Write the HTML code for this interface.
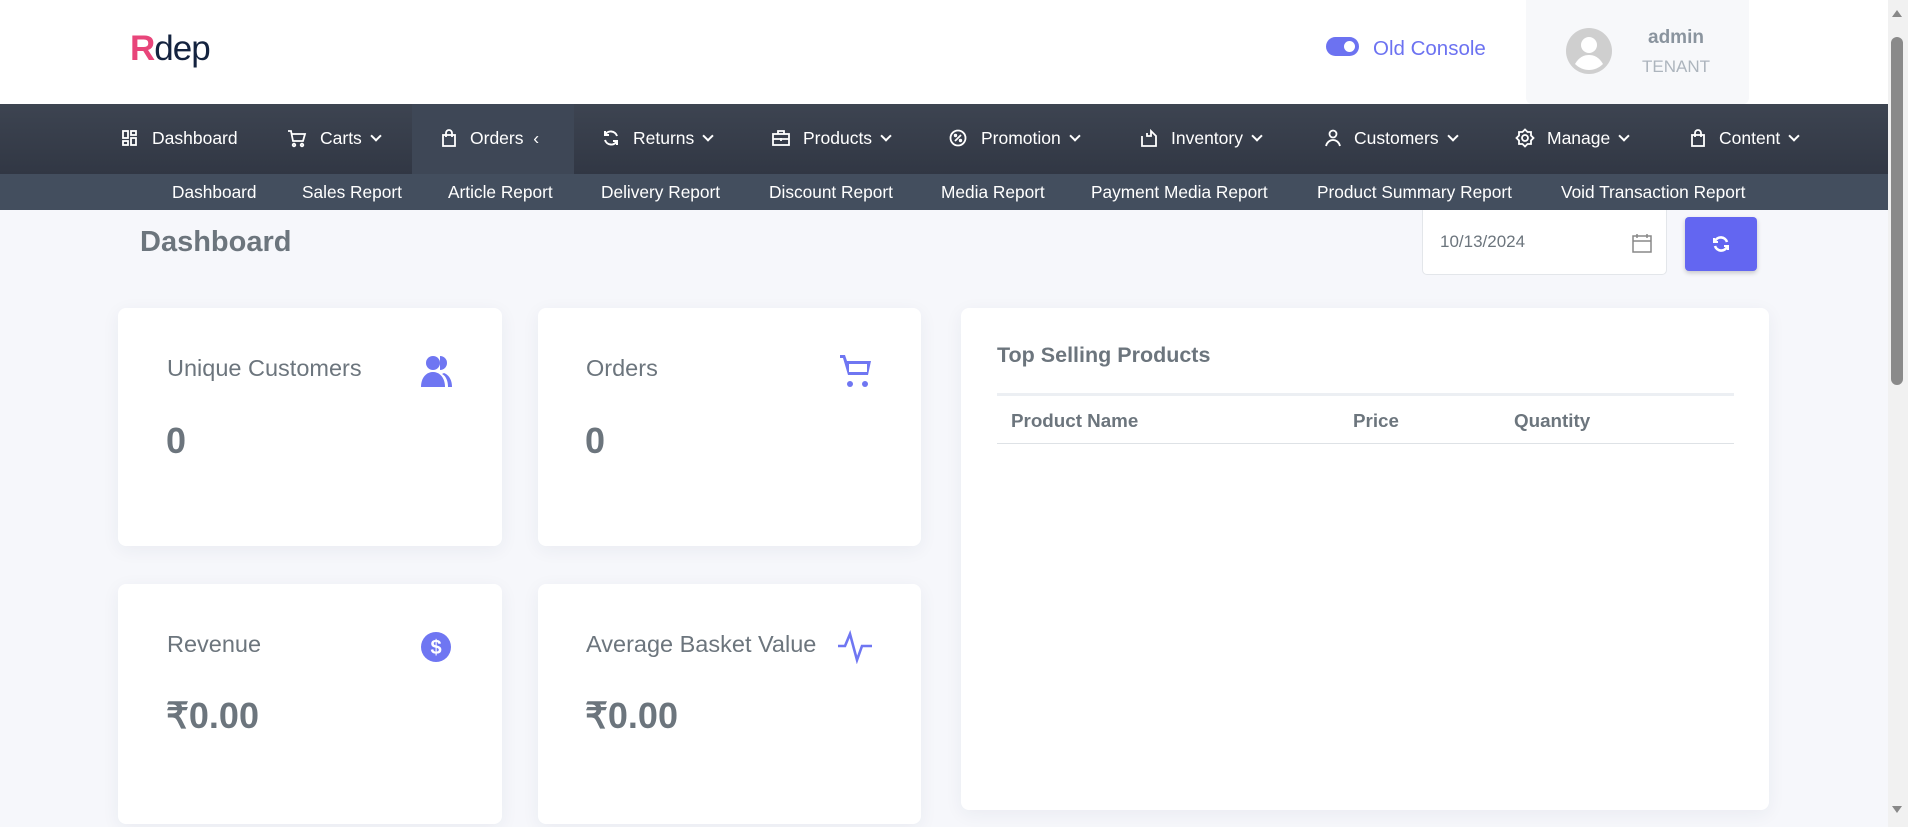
<!DOCTYPE html>
<html><head><meta charset="utf-8"><style>
*{margin:0;padding:0;box-sizing:border-box}
body{width:1908px;height:827px;overflow:hidden;background:#f6f7fb;font-family:"Liberation Sans",sans-serif;position:relative}
.a{position:absolute;white-space:nowrap}
.hdr{left:0;top:0;width:1888px;height:104px;background:#fff}
.nav{left:0;top:104px;width:1888px;height:70px;background:linear-gradient(#3d4451,#313744)}
.sub{left:0;top:174px;width:1888px;height:36px;background:#434e5e}
.nt{color:#fff;font-size:17.5px;top:128px}
.st{color:#fff;font-size:17.3px;top:182px}
.ic{top:128px;width:20px;height:20px}
.card{background:#fff;border-radius:8px;box-shadow:0 4px 18px rgba(40,50,90,.06)}
.lbl{color:#6c757d;font-size:23.5px}
.val{color:#6c757d;font-size:36px;font-weight:bold}
.th{color:#6c757d;font-size:18.8px;font-weight:bold;top:410px}
.cv{display:inline-block;width:8px;height:8px;border-right:2px solid #fff;border-bottom:2px solid #fff;transform:rotate(45deg);margin-left:10px;position:relative;top:-4px}
</style></head><body>
<div class="a hdr"></div>
<div class="a" style="left:130px;top:29px;font-size:35px;color:#14233f;letter-spacing:-1px"><span style="color:#e8457a;font-weight:bold">R</span>dep</div>
<div class="a" style="left:1326px;top:37px;width:33px;height:19px;border-radius:10px;background:#6c72f1"><div style="position:absolute;right:4px;top:4px;width:11px;height:11px;border-radius:50%;background:#fff"></div></div>
<div class="a" style="left:1373px;top:37px;font-size:20.5px;color:#6c72f1">Old Console</div>
<div class="a" style="left:1526px;top:0;width:223px;height:104px;background:#f7f8fa;border-radius:0 0 6px 6px"></div>
<svg class="a" style="left:1565px;top:27px" width="48" height="48" viewBox="0 0 48 48"><circle cx="24" cy="24" r="23" fill="#cfcfcf"/><circle cx="24" cy="18" r="8" fill="#fff"/><path d="M10 37c4-7 9-9 14-9s10 2 14 9c-4 4-9 6-14 6s-10-2-14-6z" fill="#fff"/></svg>
<div class="a" style="left:1648px;top:27px;font-size:19px;font-weight:bold;color:#8a949e">admin</div>
<div class="a" style="left:1642px;top:57px;font-size:17px;color:#adb5bd">TENANT</div>
<div class="a" style="right:0;top:0;width:20px;height:827px;background:#f1f1f1"></div>
<div class="a" style="left:1891px;top:37px;width:12px;height:348px;border-radius:6px;background:#8a8a8a"></div>
<div class="a" style="left:1892px;top:10px;width:0;height:0;border-left:5px solid transparent;border-right:5px solid transparent;border-bottom:7px solid #888"></div>
<div class="a" style="left:1892px;top:806px;width:0;height:0;border-left:5px solid transparent;border-right:5px solid transparent;border-top:7px solid #888"></div>

<div class="a nav"></div>
<div class="a" style="left:412px;top:104px;width:162px;height:70px;background:#3e4756"></div>
<div class="a sub"></div>
<svg class="a ic" style="left:120px" viewBox="0 0 20 20" fill="none" stroke="#fff" stroke-width="1.8"><rect x="3" y="3" width="5" height="7"/><rect x="11" y="3" width="5" height="4"/><rect x="3" y="13" width="5" height="4"/><rect x="11" y="10" width="5" height="7"/></svg>
<div class="a nt" style="left:152px">Dashboard</div>
<svg class="a ic" style="left:287px" viewBox="0 0 20 20" fill="none" stroke="#fff" stroke-width="1.8"><path d="M1 3h3l2 10h10l2-7H5"/><circle cx="7" cy="17" r="1.3"/><circle cx="15" cy="17" r="1.3"/></svg>
<div class="a nt" style="left:320px">Carts<span class="cv"></span></div>
<svg class="a ic" style="left:439px" viewBox="0 0 20 20" fill="none" stroke="#fff" stroke-width="1.8"><rect x="4" y="7" width="12" height="11"/><path d="M7 9V5a3 3 0 016 0v4"/></svg>
<div class="a nt" style="left:470px">Orders &nbsp;‹</div>
<svg class="a ic" style="left:601px" viewBox="0 0 20 20" fill="none" stroke="#fff" stroke-width="2"><path d="M16 8a6.5 6.5 0 00-12-1M4 12a6.5 6.5 0 0012 1M4 3v4h4M16 17v-4h-4"/></svg>
<div class="a nt" style="left:633px">Returns<span class="cv"></span></div>
<svg class="a ic" style="left:771px" viewBox="0 0 20 20" fill="none" stroke="#fff" stroke-width="1.8"><rect x="2" y="6" width="16" height="11"/><path d="M7 6V3h6v3M2 11h16M10 10v3"/></svg>
<div class="a nt" style="left:803px">Products<span class="cv"></span></div>
<svg class="a ic" style="left:948px" viewBox="0 0 20 20" fill="none" stroke="#fff" stroke-width="1.8"><circle cx="10" cy="10" r="7.5"/><path d="M7 13l6-6"/><circle cx="7.5" cy="7.5" r=".8"/><circle cx="12.5" cy="12.5" r=".8"/></svg>
<div class="a nt" style="left:981px">Promotion<span class="cv"></span></div>
<svg class="a ic" style="left:1139px" viewBox="0 0 20 20" fill="none" stroke="#fff" stroke-width="1.8"><path d="M3 8v10h14V8l-5-5v5H8V5"/></svg>
<div class="a nt" style="left:1171px">Inventory<span class="cv"></span></div>
<svg class="a ic" style="left:1323px" viewBox="0 0 20 20" fill="none" stroke="#fff" stroke-width="1.8"><circle cx="10" cy="6" r="3.5"/><path d="M3 18c1-4 4-6 7-6s6 2 7 6"/></svg>
<div class="a nt" style="left:1354px">Customers<span class="cv"></span></div>
<svg class="a ic" style="left:1515px" viewBox="0 0 20 20" fill="none" stroke="#fff" stroke-width="1.8"><path d="M10 1.5l2.5 2.5h3.5v3.5L18.5 10 16 12.5V16h-3.5L10 18.5 7.5 16H4v-3.5L1.5 10 4 7.5V4h3.5z"/><circle cx="10" cy="10" r="3"/></svg>
<div class="a nt" style="left:1547px">Manage<span class="cv"></span></div>
<svg class="a ic" style="left:1688px" viewBox="0 0 20 20" fill="none" stroke="#fff" stroke-width="1.8"><rect x="4" y="7" width="12" height="11"/><path d="M7 9V5a3 3 0 016 0v4"/></svg>
<div class="a nt" style="left:1719px">Content<span class="cv"></span></div>

<div class="a st" style="left:172px">Dashboard</div>
<div class="a st" style="left:302px">Sales Report</div>
<div class="a st" style="left:448px">Article Report</div>
<div class="a st" style="left:601px">Delivery Report</div>
<div class="a st" style="left:769px">Discount Report</div>
<div class="a st" style="left:941px">Media Report</div>
<div class="a st" style="left:1091px">Payment Media Report</div>
<div class="a st" style="left:1317px">Product Summary Report</div>
<div class="a st" style="left:1561px">Void Transaction Report</div>

<div class="a" style="left:140px;top:226px;font-size:29px;font-weight:bold;color:#6c757d">Dashboard</div>
<div class="a" style="left:1422px;top:210px;width:245px;height:65px;background:#fff;border:1px solid #e3e6ea;border-top:none;border-radius:0 0 5px 5px"></div>
<div class="a" style="left:1440px;top:232px;font-size:17px;color:#6c757d">10/13/2024</div>
<svg class="a" style="left:1631px;top:232px" width="22" height="22" viewBox="0 0 22 22" fill="none" stroke="#888" stroke-width="1.5"><rect x="2" y="4" width="18" height="16"/><path d="M2 9h18M6 2v4M16 2v4"/></svg>
<div class="a" style="left:1685px;top:217px;width:72px;height:54px;background:#6366f1;border-radius:4px;box-shadow:0 2px 5px rgba(0,0,0,.2)"></div>
<svg class="a" style="left:1711px;top:234px" width="20" height="20" viewBox="0 0 20 20" fill="none" stroke="#fff" stroke-width="2.6"><path d="M16 8a6.5 6.5 0 00-12-1M4 12a6.5 6.5 0 0012 1"/><path d="M3 4v4h4M17 16v-4h-4" stroke-width="2"/></svg>

<div class="a card" style="left:118px;top:308px;width:384px;height:238px"></div>
<div class="a lbl" style="left:167px;top:355px">Unique Customers</div>
<svg class="a" style="left:420px;top:354px" width="34" height="34" viewBox="0 0 34 34" fill="#6f76f2"><circle cx="13" cy="9" r="7"/><path d="M1 33c0-9 5-15 12-15s12 6 12 15z"/><path d="M20 2a7 7 0 010 14M24 19c5 2 8 7 8 14h-4c0-6-2-11-6-13z"/></svg>
<div class="a val" style="left:166px;top:420px">0</div>
<div class="a card" style="left:538px;top:308px;width:383px;height:238px"></div>
<div class="a lbl" style="left:586px;top:355px">Orders</div>
<svg class="a" style="left:839px;top:354px" width="34" height="34" viewBox="0 0 34 34" fill="#6f76f2"><path d="M1 1h5l2 6h24l-3 14H9L4 4H1z"/><rect x="10" y="10" width="18" height="8" fill="#fff"/><circle cx="11" cy="30" r="3"/><circle cx="26" cy="30" r="3"/></svg>
<div class="a val" style="left:585px;top:420px">0</div>

<div class="a card" style="left:118px;top:584px;width:384px;height:240px"></div>
<div class="a lbl" style="left:167px;top:631px">Revenue</div>
<svg class="a" style="left:420px;top:631px" width="32" height="32" viewBox="0 0 32 32"><circle cx="16" cy="16" r="15" fill="#6f76f2"/><text x="16" y="23" text-anchor="middle" font-family="Liberation Sans" font-weight="bold" font-size="20" fill="#fff">$</text></svg>
<div class="a val" style="left:166px;top:695px">₹0.00</div>
<div class="a card" style="left:538px;top:584px;width:383px;height:240px"></div>
<div class="a lbl" style="left:586px;top:631px">Average Basket Value</div>
<svg class="a" style="left:837px;top:630px" width="36" height="34" viewBox="0 0 36 34" fill="none" stroke="#6f76f2" stroke-width="2.6"><path d="M1 16h7l5-12 7 26 5-14h10"/></svg>
<div class="a val" style="left:585px;top:695px">₹0.00</div>

<div class="a card" style="left:961px;top:308px;width:808px;height:502px"></div>
<div class="a" style="left:997px;top:343px;font-size:21.5px;font-weight:bold;color:#6c757d">Top Selling Products</div>
<div class="a" style="left:997px;top:393px;width:737px;height:3px;background:#eceff3"></div>
<div class="a th" style="left:1011px">Product Name</div>
<div class="a th" style="left:1353px">Price</div>
<div class="a th" style="left:1514px">Quantity</div>
<div class="a" style="left:997px;top:443px;width:737px;height:1px;background:#dee2e6"></div>
</body></html>
